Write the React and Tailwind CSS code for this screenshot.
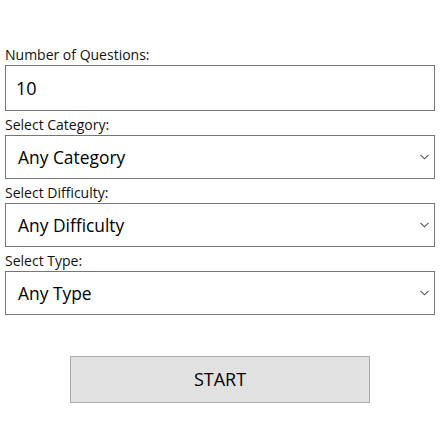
import React from "react";

function Chevron() {
  return (
    <svg width="9" height="6" viewBox="0 0 9 6" className="absolute right-[5px] top-1/2 -translate-y-1/2" fill="none">
      <path d="M0.5 0.8 L4.5 4.8 L8.5 0.8" stroke="#555" strokeWidth="1.1" />
    </svg>
  );
}

function Field({ label, children }) {
  return (
    <div className="mb-[6px]">
      <div className="h-[18px] text-[14px] leading-[15px] text-[#111]">{label}</div>
      {children}
    </div>
  );
}

function SelectBox({ text }) {
  return (
    <div className="relative h-[44px] border border-[#767676] bg-white flex items-center pl-[12px] text-[17.4px] text-black">
      {text}
      <Chevron />
    </div>
  );
}

export default function App() {
  return (
    <div className="w-[440px] h-[440px] bg-white px-[5px] pt-[47px]" style={{ fontFamily: '"Open Sans", "Noto Sans", sans-serif' }}>
      <Field label="Number of Questions:">
        <div className="h-[46px] border border-[#767676] bg-white flex items-center pl-[10px] text-[18px] text-black">10</div>
      </Field>
      <Field label="Select Category:">
        <SelectBox text="Any Category" />
      </Field>
      <Field label="Select Difficulty:">
        <SelectBox text="Any Difficulty" />
      </Field>
      <Field label="Select Type:">
        <SelectBox text="Any Type" />
      </Field>
      <div className="flex justify-center pt-[35px]">
        <button className="w-[300px] h-[47px] border border-[#adadad] bg-[#e1e1e1] text-[18px] text-black">START</button>
      </div>
    </div>
  );
}
